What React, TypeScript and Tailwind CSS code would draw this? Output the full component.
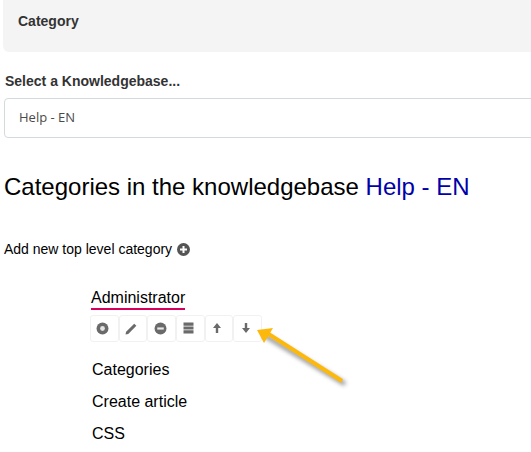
const sans = { fontFamily: '"Liberation Sans", Arial, sans-serif' };

function Btn({ children }: { children: React.ReactNode }) {
  return (
    <div className="flex h-[27px] w-[28.67px] items-center justify-center rounded-[3px] border border-[#f1f1f1] bg-white pb-[1px] pr-[3px]">
      {children}
    </div>
  );
}

const G = "#6a6a6a";

export default function App() {
  return (
    <div className="relative h-[452px] w-[531px] overflow-hidden bg-white" style={sans}>
      <div className="ml-[3px] flex h-[52px] w-[540px] rounded-bl-[6px] bg-[#f4f4f4] pl-[15px] pt-[13px]">
        <span className="text-[14px] font-bold leading-[17px] text-[#333333]">Category</span>
      </div>
      <div className="ml-[5px] mt-[21px] text-[14px] font-bold leading-[17px] text-[#333333]">
        Select a Knowledgebase...
      </div>
      <div className="ml-[4px] mt-[8px] flex h-[40px] w-[540px] items-center rounded-[4px] border border-[#d3dadd] pl-[14px] font-['Open_Sans',sans-serif] text-[13px] text-[#4a4a4a]">
        Help - EN
      </div>
      <div className="ml-[4px] mt-[34px] text-[24px] leading-[30px] text-black">
        Categories in the knowledgebase <span className="text-[#0000aa]">Help - EN</span>
      </div>
      <div className="ml-[4px] mt-[38px] flex items-center gap-[5px] text-[14px] leading-[18px] text-black">
        Add new top level category
        <svg width="13" height="13" viewBox="0 0 13 13">
          <circle cx="6.5" cy="6.5" r="6.5" fill="#555" />
          <path d="M6.5 3v7M3 6.5h7" stroke="#fff" strokeWidth="2" />
        </svg>
      </div>
      <div className="ml-[90px] mt-[30px]">
        <div className="ml-[1px] w-fit border-b-[2px] border-[#d6005c] pb-[1px] text-[16px] leading-[19px] text-black">Administrator</div>
        <div className="mt-[5px] flex blur-[0.5px]">
          <Btn>
            <svg width="13" height="13" viewBox="0 0 12 12">
              <circle cx="6" cy="6" r="5.5" fill={G} />
              <circle cx="6" cy="6" r="2.2" fill="#e4e4e4" />
            </svg>
          </Btn>
          <Btn>
            <svg width="13" height="13" viewBox="0 0 12 12">
              <path d="M0.5 11.5l.5-2.5 7.5-7.5 2 2-7.5 7.5z" fill={G} />
            </svg>
          </Btn>
          <Btn>
            <svg width="13" height="13" viewBox="0 0 12 12">
              <circle cx="6" cy="6" r="5.5" fill={G} />
              <path d="M3 6h6" stroke="#e8e8e8" strokeWidth="2" />
            </svg>
          </Btn>
          <Btn>
            <svg width="13" height="12" viewBox="0 0 12 12">
              <path d="M1 0.5h10v3.2H1zM1 4.4h10v3.2H1zM1 8.3h10v3.2H1z" fill={G} />
            </svg>
          </Btn>
          <Btn>
            <svg width="10" height="12" viewBox="0 0 10 12">
              <path d="M5 1L9 6H6.2v5H3.8V6H1z" fill={G} />
            </svg>
          </Btn>
          <Btn>
            <svg width="10" height="12" viewBox="0 0 10 12">
              <path d="M5 11L9 6H6.2V1H3.8v5H1z" fill={G} />
            </svg>
          </Btn>
        </div>
        <div className="ml-[2px] mt-[18px] flex flex-col gap-[12px] text-[16px] leading-[20px] text-black">
          <div>Categories</div>
          <div>Create article</div>
          <div>CSS</div>
        </div>
      </div>
      <svg className="absolute left-[250px] top-[324px]" width="110" height="70" viewBox="0 0 110 70">
        <defs>
          <filter id="s" x="-20%" y="-30%" width="140%" height="160%">
            <feGaussianBlur stdDeviation="2" />
          </filter>
        </defs>
        <path d="M14 11L95 60" stroke="#444" strokeWidth="4" opacity="0.6" filter="url(#s)" />
        <path d="M17 9L92 57" stroke="#fdb90b" strokeWidth="4" />
        <path d="M7 6L23 4L14 19z" fill="#fdb90b" />
      </svg>
    </div>
  );
}
